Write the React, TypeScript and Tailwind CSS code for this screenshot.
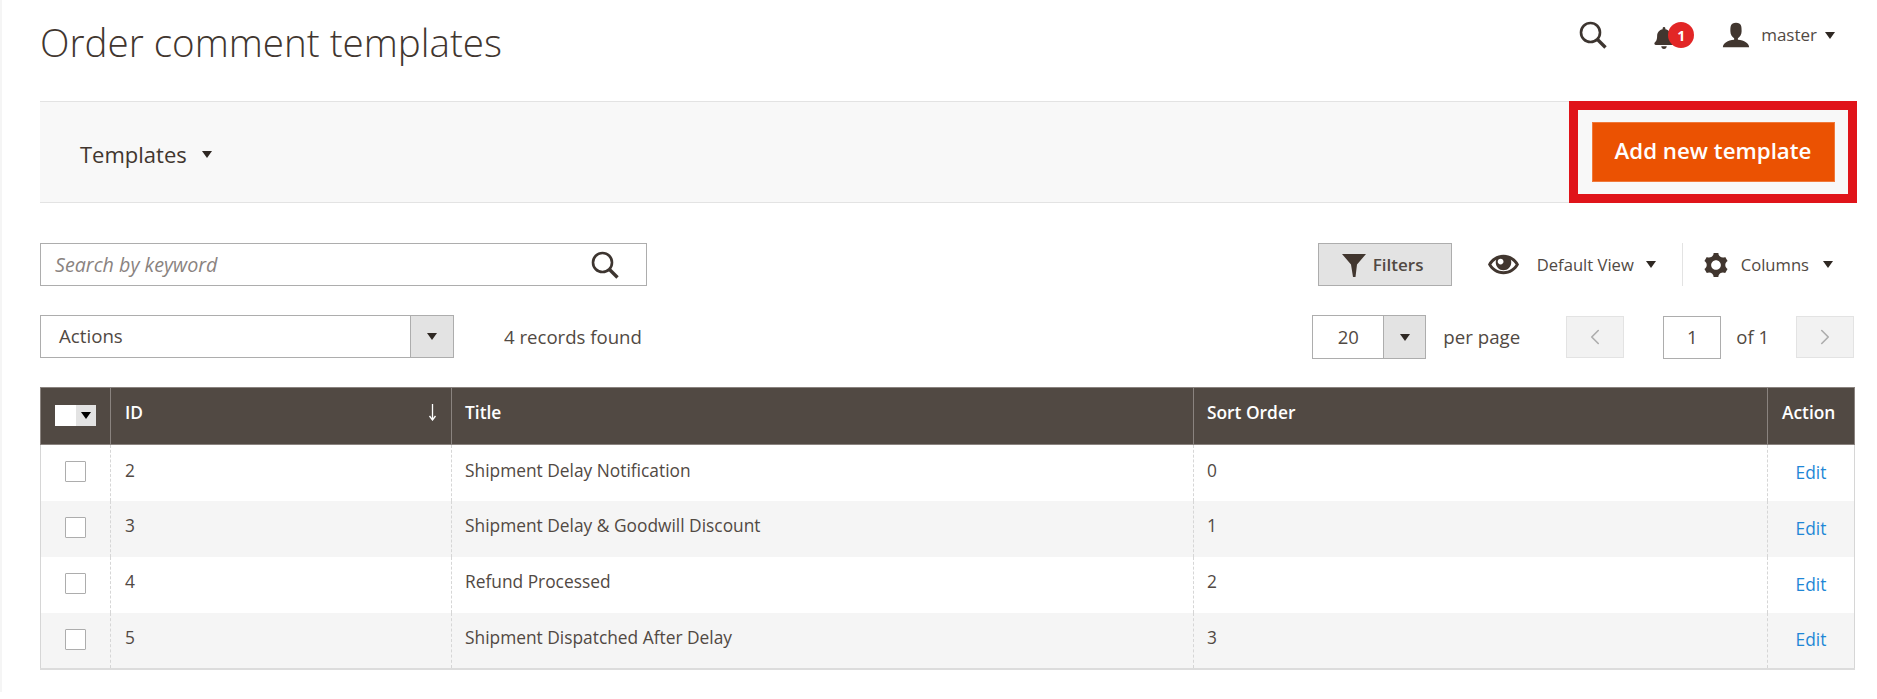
import React from 'react';
import { ImUser, ImEye, ImCog } from 'react-icons/im';
import { FaBell } from 'react-icons/fa';
import { ChevronLeft, ChevronRight } from 'lucide-react';

const rows = [
  { id: 2, title: 'Shipment Delay Notification', sort: 0 },
  { id: 3, title: 'Shipment Delay & Goodwill Discount', sort: 1 },
  { id: 4, title: 'Refund Processed', sort: 2 },
  { id: 5, title: 'Shipment Dispatched After Delay', sort: 3 },
];

// Small filled dropdown triangle used all over the admin
const Caret = ({ className = '' }: { className?: string }) => (
  <span className={`inline-block w-0 h-0 border-x-[5px] border-x-transparent border-t-[7px] border-t-[#2f2823] ${className}`} />
);

const SearchIcon = ({ size }: { size: number }) => (
  <svg width={size} height={size} viewBox="0 0 28 28" fill="none" stroke="#3d3530" strokeWidth="2.6">
    <circle cx="11.5" cy="11.5" r="9.5" />
    <path d="M18.5 18.5 L26.5 26.5" strokeWidth="3.4" />
  </svg>
);

const FunnelIcon = () => (
  <svg width="24" height="24" viewBox="0 0 24 24" fill="#41362f">
    <path d="M0 1 H24 L15 11.5 L13.5 24 L11 24 L9 11.5 Z" />
  </svg>
);

const SortArrow = () => (
  <svg width="9" height="17" viewBox="0 0 9 17" fill="none" stroke="#fff" strokeWidth="1.3">
    <path d="M4.5 0 V15.5" />
    <path d="M1.5 12 L4.5 16 L7.5 12" />
  </svg>
);

export default function App() {
  return (
    <div className="relative w-[1877px] h-[699px] bg-white overflow-hidden text-[#514943] font-['Open_Sans',sans-serif]">
      {/* sidebar edge */}
      <div className="absolute left-0 top-0 w-[2px] h-[692px] bg-[#f5f5f5]" />

      <div className="pl-10 pr-[20px]">
        {/* Title row */}
        <div className="h-[101px] flex items-start">
          <h1 className="mt-[18px] text-[38.6px] leading-[48px] font-light text-[#41362f]">Order comment templates</h1>
          <div className="ml-auto flex items-center pt-[10px] h-[50px] box-content">
            <SearchIcon size={28} />
            <div className="relative ml-[46px] w-[41px] h-[26px]">
              <FaBell className="absolute left-0 top-[5px] text-[#41362f]" size={22} />
              <span className="absolute left-[15px] top-0 w-[26px] h-[26px] rounded-full bg-[#e22626] text-white text-[14px] font-bold flex items-center justify-center">1</span>
            </div>
            <ImUser className="ml-[27px] mb-[3px] text-[#41362f]" size={30} />
            <span className="ml-[10px] text-[17px] text-[#514943]">master</span>
            <Caret className="ml-[8px] mr-[2px]" />
            <span className="w-[20px]" />
          </div>
        </div>

        {/* Page actions */}
        <div className="h-[102px] flex items-stretch justify-between bg-[#f8f8f8] border-y border-[#e3e3e3]">
          <div className="flex items-center pl-10 pt-[4px]">
            <span className="text-[22px] text-[#41362f]">Templates</span>
            <Caret className="ml-[15px]" />
          </div>
          <div className="w-[288px] border-[9px] border-[#e0141a] flex items-center justify-center -my-px">
            <button className="w-[243px] h-[60px] pb-[2px] bg-[#eb5202] border border-[#f0793a] text-white text-[22.3px] font-semibold">Add new template</button>
          </div>
        </div>

        {/* Search + view controls */}
        <div className="mt-[40px] flex items-center justify-between pr-[4px]">
          <div className="w-[607px] h-[43px] border border-[#adadad] flex items-center justify-between pl-[14px] pr-[27px]">
            <span className="italic text-[19.7px] text-[#8a837f]">Search by keyword</span>
            <SearchIcon size={28} />
          </div>
          <div className="flex items-center">
            <button className="w-[134px] h-[43px] bg-[#e3e3e3] border border-[#adadad] flex items-center pl-[23px] font-semibold text-[17px] text-[#514943]">
              <FunnelIcon />
              <span className="ml-[7px]">Filters</span>
            </button>
            <ImEye size={31} className="ml-[36px] text-[#41362f]" />
            <span className="ml-[18px] pt-[2px] text-[16.6px]">Default View</span>
            <Caret className="ml-[12px]" />
            <span className="ml-[26px] w-px h-[43px] bg-[#e3e3e3]" />
            <ImCog size={24} className="ml-[21px] text-[#41362f]" />
            <span className="ml-[13px] pt-[2px] text-[16.6px]">Columns</span>
            <Caret className="ml-[14px] mr-[20px]" />
          </div>
        </div>

        {/* Mass actions + pager */}
        <div className="mt-[29px] flex items-center pr-[3px]">
          <div className="w-[414px] h-[43px] mb-px border border-[#adadad] flex items-stretch">
            <span className="flex-1 flex items-center pl-[18px] text-[18.7px]">Actions</span>
            <span className="w-[43px] bg-[#e3e3e3] border-l border-[#adadad] flex items-center justify-center"><Caret /></span>
          </div>
          <span className="ml-[50px] text-[18.6px]">4 records found</span>

          <div className="ml-auto w-[114px] h-[44px] border border-[#adadad] flex items-stretch">
            <span className="flex-1 flex items-center justify-center text-[18.5px]">20</span>
            <span className="w-[42px] bg-[#e3e3e3] border-l border-[#adadad] flex items-center justify-center"><Caret /></span>
          </div>
          <span className="ml-[17px] text-[18.7px]">per page</span>
          <button className="ml-[46px] w-[58px] h-[42px] bg-[#f2f2f2] border border-[#e3e3e3] flex items-center justify-center"><ChevronLeft size={26} strokeWidth={1.5} className="text-[#adadad]" /></button>
          <div className="ml-[39px] w-[58px] h-[43px] border border-[#adadad] flex items-center justify-center text-[18.5px]">1</div>
          <span className="ml-[15px] text-[18.5px]">of 1</span>
          <button className="ml-[27px] w-[58px] h-[42px] bg-[#f2f2f2] border border-[#e3e3e3] flex items-center justify-center"><ChevronRight size={26} strokeWidth={1.5} className="text-[#adadad]" /></button>
        </div>

        {/* Grid */}
        <table className="mt-[28px] w-[1814px] table-fixed border-collapse text-[17.35px]">
          <colgroup>
            <col className="w-[70px]" />
            <col className="w-[341px]" />
            <col className="w-[742px]" />
            <col className="w-[574px]" />
            <col className="w-[87px]" />
          </colgroup>
          <thead>
            <tr className="h-[57px] bg-[#514943] text-white text-left">
              <th className="border border-[#8a837f] p-0">
                <div className="mx-auto w-[41px] h-[21px] flex bg-white -translate-y-px">
                  <span className="w-[21px]" />
                  <span className="flex-1 bg-[#e3e3e3] flex items-center justify-center"><Caret className="border-x-[4.5px] border-t-[6px] border-t-black" /></span>
                </div>
              </th>
              <th className="border border-[#8a837f] pl-[14px] pb-[7px] font-semibold">
                <div className="flex items-center justify-between pr-[14px]">
                  <span>ID</span>
                  <SortArrow />
                </div>
              </th>
              <th className="border border-[#8a837f] pl-[13px] pb-[7px] font-semibold">Title</th>
              <th className="border border-[#8a837f] pl-[13px] pb-[7px] font-semibold">Sort Order</th>
              <th className="border border-[#8a837f] pl-[14px] pb-[7px] font-semibold">Action</th>
            </tr>
          </thead>
          <tbody>
            {rows.map((row, i) => (
              <tr key={row.id} className={`h-[56px] ${i % 2 === 1 ? 'bg-[#f5f5f5]' : 'bg-white'}`}>
                <td className="border-l border-r border-dashed border-[#d6d6d6] p-0 pb-[2px] [border-left-style:solid]">
                  <div className="mx-auto w-[21px] h-[21px] border border-[#adadad] bg-white rounded-[1px]" />
                </td>
                <td className="border-r border-dashed border-[#d6d6d6] pl-[14px] pb-[6px]">{row.id}</td>
                <td className="border-r border-dashed border-[#d6d6d6] pl-[13px] pb-[6px]">{row.title}</td>
                <td className="border-r border-dashed border-[#d6d6d6] pl-[13px] pb-[6px]">{row.sort}</td>
                <td className="border-r border-[#d6d6d6] text-center pb-[1px] text-[#1f87d6]">Edit</td>
              </tr>
            ))}
          </tbody>
          <tfoot>
            <tr><td colSpan={5} className="border-t-2 border-[#dcdcdc] p-0" /></tr>
          </tfoot>
        </table>
      </div>
    </div>
  );
}
